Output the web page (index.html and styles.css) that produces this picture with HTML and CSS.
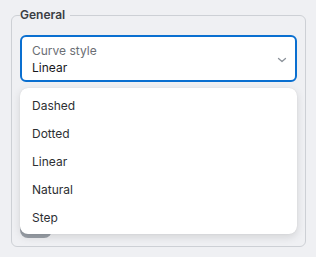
FILE: index.html
```html
<!DOCTYPE html>
<html>
<head>
<meta charset="utf-8">
<link rel="stylesheet" href="styles.css">
</head>
<body>
<div class="page">
  <fieldset class="group">
    <legend class="group-title">General</legend>
    <div class="select">
      <div class="select-text">
        <span class="select-label">Curve style</span>
        <span class="select-value">Linear</span>
      </div>
      <svg class="chevron" width="10" height="6" viewBox="0 0 10 6"><path d="M1.5 1.5 L5 4.5 L8.5 1.5" fill="none" stroke="#8d939b" stroke-width="1.3" stroke-linecap="round" stroke-linejoin="round"/></svg>
    </div>
    <div class="below">
      <div class="toggle"><span class="knob"></span></div>
      <ul class="menu">
        <li>Dashed</li>
        <li>Dotted</li>
        <li>Linear</li>
        <li>Natural</li>
        <li>Step</li>
      </ul>
    </div>
  </fieldset>
</div>
</body>
</html>
```

FILE: styles.css
```css
html, body {
  margin: 0;
  padding: 0;
  background: #eff0f3;
  font-family: Inter, "Noto Sans", sans-serif;
}
.page {
  width: 316px;
  height: 257px;
  padding: 10px 11px 0 11px;
  box-sizing: border-box;
}
.group {
  margin: 0;
  border: 1px solid #cdd0d5;
  border-radius: 6px;
  padding: 0 8px 0 8px;
  height: 237px;
  box-sizing: border-box;
}
.group-title {
  font-size: 12px;
  font-weight: 600;
  color: #3b3e44;
  padding: 0 5px 0 0;
  margin-left: 0;
  line-height: 10px;
}
.select {
  margin-top: 15px;
  height: 47px;
  box-sizing: border-box;
  border: 2px solid #0a6fd0;
  border-radius: 6px;
  background: #fff;
  display: flex;
  align-items: center;
  padding: 0 8px 0 10px;
}
.select-text {
  flex: 1;
  display: flex;
  flex-direction: column;
}
.select-label {
  font-size: 12px;
  color: #6b6e74;
  line-height: 17px;
}
.select-value {
  font-size: 12px;
  color: #18191c;
  line-height: 17px;
}
.chevron {
  display: block;
  margin-top: 3px;
}
.below {
  position: relative;
  margin-top: 6px;
}
.toggle {
  position: absolute;
  left: 0;
  top: 134px;
  width: 32px;
  height: 16px;
  border-radius: 8px;
  background: #9aa0a8;
}
.menu {
  position: relative;
  list-style: none;
  margin: 0;
  padding: 4px 0 2px 0;
  width: 277px;
  background: #fff;
  border-radius: 8px;
  box-shadow: 0 3px 8px rgba(0,0,0,0.12), 0 0 1px rgba(0,0,0,0.14);
}
.menu li {
  height: 28px;
  line-height: 28px;
  padding-left: 12px;
  font-size: 12px;
  color: #2d2f33;
}
```
